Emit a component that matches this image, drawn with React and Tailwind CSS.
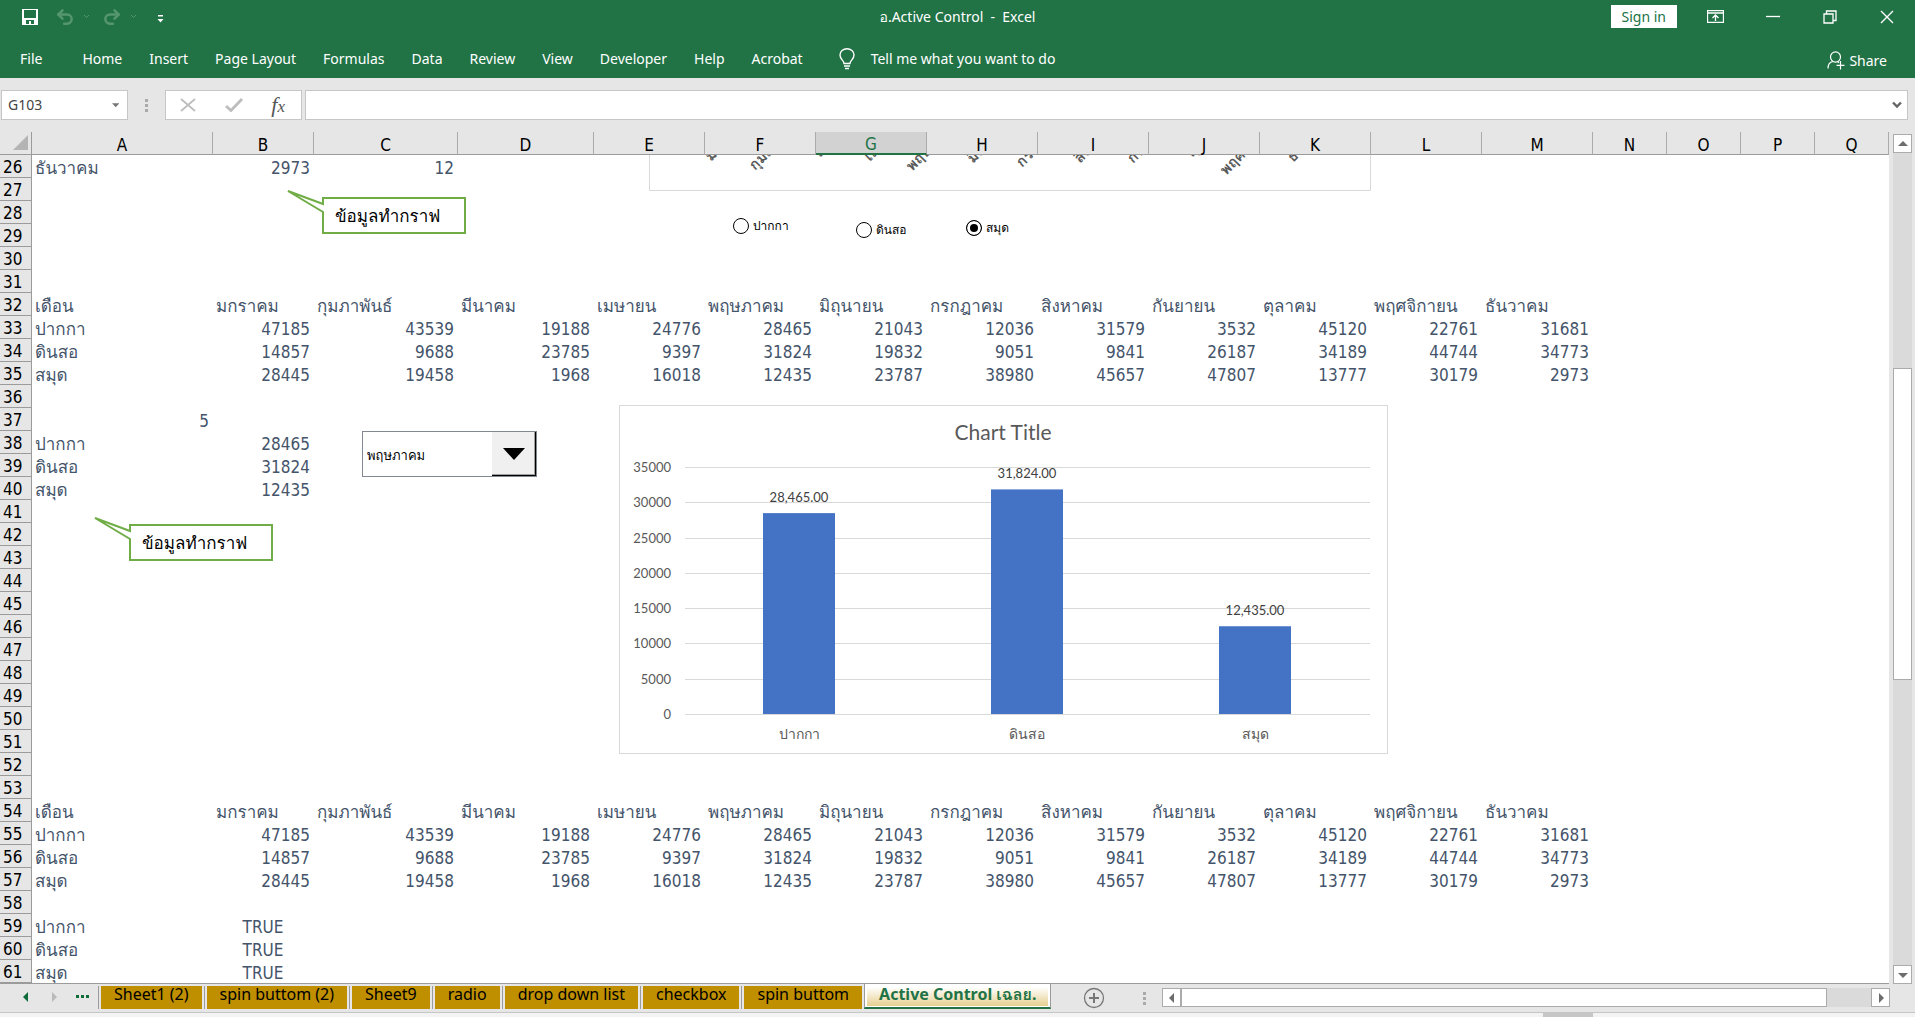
import React, { useState } from "react";
import { Undo2, Redo2 } from "lucide-react";

const menuItems = ["Home", "Insert", "Page Layout", "Formulas", "Data", "Review", "View", "Developer", "Help", "Acrobat"];

const columns = "ABCDEFGHIJKLMNOPQ".split("");

const months = [
	"เดือน", "มกราคม", "กุมภาพันธ์", "มีนาคม", "เมษายน", "พฤษภาคม", "มิถุนายน",
	"กรกฎาคม", "สิงหาคม", "กันยายน", "ตุลาคม", "พฤศจิกายน", "ธันวาคม",
];
const pens = ["ปากกา", 47185, 43539, 19188, 24776, 28465, 21043, 12036, 31579, 3532, 45120, 22761, 31681];
const pencils = ["ดินสอ", 14857, 9688, 23785, 9397, 31824, 19832, 9051, 9841, 26187, 34189, 44744, 34773];
const notebooks = ["สมุด", 28445, 19458, 1968, 16018, 12435, 23787, 38980, 45657, 47807, 13777, 30179, 2973];

const cells = {
	26: ["ธันวาคม", 2973, 12],
	32: months,
	33: pens,
	34: pencils,
	35: notebooks,
	37: [5],
	38: ["ปากกา", 28465],
	39: ["ดินสอ", 31824],
	40: ["สมุด", 12435],
	54: months,
	55: pens,
	56: pencils,
	57: notebooks,
	59: ["ปากกา", true],
	60: ["ดินสอ", true],
	61: ["สมุด", true],
};

const rowNumbers = Array.from({ length: 36 }, (_, i) => i + 26);

const sheetTabs = ["Sheet1 (2)", "spin buttom (2)", "Sheet9", "radio", "drop down list", "checkbox", "spin buttom"];

// Visible start of each slanted axis label of the upper chart
const slantedLabels = [
	{ text: "มกราคม", x: 62, y: 7 },
	{ text: "กุมภาพันธ์", x: 106, y: 16 },
	{ text: "มีนาคม", x: 171, y: 3 },
	{ text: "เมษายน", x: 221, y: 7 },
	{ text: "พฤษภาคม", x: 263, y: 17 },
	{ text: "มิถุนายน", x: 324, y: 9 },
	{ text: "กรกฎาคม", x: 373, y: 13 },
	{ text: "สิงหาคม", x: 431, y: 9 },
	{ text: "กันยายน", x: 484, y: 9 },
	{ text: "ตุลาคม", x: 543, y: 3 },
	{ text: "พฤศจิกายน", x: 577, y: 21 },
	{ text: "ธันวาคม", x: 644, y: 8 },
];

const chartBars = [
	{ name: "ปากกา", value: 28465, label: "28,465.00" },
	{ name: "ดินสอ", value: 31824, label: "31,824.00" },
	{ name: "สมุด", value: 12435, label: "12,435.00" },
];

const Chevron = ({ className }) => (
	<svg width="7" height="5" viewBox="0 0 7 5" className={className} aria-hidden="true">
		<path d="M1 1l2.5 2.5L6 1" fill="none" stroke="currentColor" />
	</svg>
);

const Triangle = ({ dir }) => {
	const points = {
		up: "1,8 11,8 6,3",
		down: "1,4 11,4 6,9",
		left: "8,1 8,11 3,6",
		right: "4,1 4,11 9,6",
	};
	return (
		<svg width="12" height="12" viewBox="0 0 12 12" aria-hidden="true">
			<polygon points={points[dir]} fill="currentColor" />
		</svg>
	);
};

const Dots = () => (
	<div className="flex flex-col gap-[2px]">
		<span className="h-[3px] w-[3px] bg-[#aaaaaa]" />
		<span className="h-[3px] w-[3px] bg-[#aaaaaa]" />
		<span className="h-[3px] w-[3px] bg-[#aaaaaa]" />
	</div>
);

const TitleBar = () => (
	<div className="grid h-[33px] grid-cols-[1fr_auto_1fr] items-center">
		<div className="flex items-center pl-[21px]">
			<button aria-label="Save">
				<svg width="18" height="18" viewBox="0 0 18 18">
					<path d="M1 1h16v16H1z" fill="#fff" />
					<path d="M3 2h12v8H3zM5 12h8v4h-3v-3H8v3H5z" fill="#217346" />
				</svg>
			</button>
			<button aria-label="Undo" className="ml-4 text-[#56966f]">
				<Undo2 size={20} strokeWidth={3} />
			</button>
			<Chevron className="ml-2 text-[#56966f]" />
			<button aria-label="Redo" className="ml-3 text-[#56966f]">
				<Redo2 size={20} strokeWidth={3} />
			</button>
			<Chevron className="ml-2 text-[#56966f]" />
			<button aria-label="Customize Quick Access Toolbar" className="ml-5 pt-1">
				<svg width="7" height="8" viewBox="0 0 7 8">
					<path d="M1 0h5v1.500H1zM0.500 4h6l-3 3.500z" fill="#fff" />
				</svg>
			</button>
		</div>
		<h1 className="whitespace-pre text-sm">อ.Active Control  -  Excel</h1>
		<div className="flex items-center justify-end">
			<button className="mr-[10px] h-[23px] bg-white px-[11px] text-sm leading-[23px] text-[#217346]">
				Sign in
			</button>
			<button aria-label="Ribbon Display Options" className="flex w-[57px] justify-center">
				<svg width="17" height="13" viewBox="0 0 17 13" fill="none" stroke="#fff">
					<path d="M0.500 0.500h16v12h-16zM0.500 3h16M8.500 11V5.500M5.500 8l3-3 3 3" strokeWidth="1.300" />
				</svg>
			</button>
			<button aria-label="Minimize" className="flex w-[57px] justify-center">
				<svg width="14" height="13" viewBox="0 0 14 13">
					<path d="M0 6.500h14" stroke="#fff" strokeWidth="1.300" />
				</svg>
			</button>
			<button aria-label="Restore" className="flex w-[57px] justify-center">
				<svg width="14" height="14" viewBox="0 0 14 14" fill="none" stroke="#fff" strokeWidth="1.300">
					<path d="M1 4h9v9H1zM3.500 4V1H13v9.500h-3" />
				</svg>
			</button>
			<button aria-label="Close" className="flex w-[57px] justify-center">
				<svg width="14" height="14" viewBox="0 0 14 14">
					<path d="M1 1l12 12M13 1L1 13" stroke="#fff" strokeWidth="1.400" />
				</svg>
			</button>
		</div>
	</div>
);

const RibbonTabs = () => (
	<nav className="flex h-[45px] items-center pl-5 pr-7 pt-[6px] text-[14px]">
		<a href="#file" className="mr-10">File</a>
		<div className="flex gap-[27px]">
			{menuItems.map((item) => (
				<a key={item} href={"#" + item}>{item}</a>
			))}
		</div>
		<button className="ml-9 flex items-center gap-4">
			<svg width="16" height="22" viewBox="0 0 16 22" fill="none" stroke="#fff" strokeWidth="1.400">
				<path d="M5 15.500c0-3-4-4-4-8.500a7 6.300 0 0 1 14 0c0 4.500-4 5.500-4 8.500zM5 18h6M6 20.500h4" />
			</svg>
			Tell me what you want to do
		</button>
		<button className="ml-auto flex items-center gap-1 pt-[3px]">
			<svg width="18" height="19" viewBox="0 0 18 19" fill="none" stroke="#fff" strokeWidth="1.200">
				<ellipse cx="8.500" cy="6" rx="5" ry="5.200" />
				<path d="M1 17.500c0-4 2-6.500 5-7M10.500 10.500l1.500 1.200M13.500 10v8.500M9.500 14.300h8" />
			</svg>
			Share
		</button>
	</nav>
);

const FormulaBar = () => (
	<div className="flex items-center pb-3 pl-px pr-[7px] pt-3 text-sm text-[#444]">
		<div className="flex h-[30px] w-[127px] items-center border border-[#c6c6c6] bg-white pl-[6px] pr-2">
			<input aria-label="Name Box" defaultValue="G103" className="w-full min-w-0 bg-transparent outline-none" />
			<svg width="8" height="5" viewBox="0 0 8 5" aria-hidden="true">
				<polygon points="0,0 8,0 4,4.500" fill="#777" />
			</svg>
		</div>
		<div className="flex w-[37px] justify-center">
			<Dots />
		</div>
		<div className="flex h-[30px] w-[137px] items-center justify-between border border-[#c6c6c6] bg-white pl-[14px] pr-4">
			<button aria-label="Cancel">
				<svg width="16" height="14" viewBox="0 0 16 14">
					<path d="M1 1l14 12M15 1L1 13" stroke="#bdbdbd" strokeWidth="1.800" />
				</svg>
			</button>
			<button aria-label="Enter">
				<svg width="18" height="14" viewBox="0 0 18 14">
					<path d="M1 8l5 4.500L17 1" fill="none" stroke="#bdbdbd" strokeWidth="2.800" />
				</svg>
			</button>
			<button aria-label="Insert Function" className="font-['Liberation_Serif',serif] text-[22px] italic leading-none text-[#555]">
				f<span className="text-[17px]">x</span>
			</button>
		</div>
		<div className="ml-[3px] flex h-[30px] flex-1 items-center border border-[#c6c6c6] bg-white pr-[5px]">
			<input aria-label="Formula Bar" className="flex-1 bg-transparent px-2 outline-none" />
			<svg width="10" height="8" viewBox="0 0 10 8" aria-hidden="true">
				<path d="M1 1.500l4 4 4-4" fill="none" stroke="#666" strokeWidth="2.400" />
			</svg>
		</div>
	</div>
);

const Cell = ({ value }) => {
	let align = "text-left";
	if (typeof value === "number") align = "text-right";
	if (value === true) align = "text-center";
	return (
		<td className={"h-[23px] whitespace-nowrap bg-white pb-0 pl-[3px] pr-1 pt-[2px] " + align}>
			{value === true ? "TRUE" : value}
		</td>
	);
};

const Grid = () => (
	<table className="w-full table-fixed border-separate border-spacing-0 border-r border-[#9b9b9b] text-[17px] leading-[20px] text-[#44546a]">
		<colgroup>
			<col className="w-8" />
			<col className="w-[181px]" />
			<col className="w-[101px]" />
			<col className="w-[144px]" />
			<col className="w-[136px]" />
			{columns.slice(4, 13).map((c) => (
				<col key={c} className="w-[111px]" />
			))}
			{columns.slice(13).map((c) => (
				<col key={c} className="w-[74px]" />
			))}
		</colgroup>
		<thead>
			<tr className="bg-[#e6e6e6] leading-[18px] text-black">
				<th className="h-[23px] border-b border-r border-[#9b9b9b] p-0">
					<svg width="15" height="16" viewBox="0 0 15 16" className="ml-auto mr-[3px]" aria-label="Select All">
						<polygon points="15,0 15,15 0,15" fill="#b4b4b4" />
					</svg>
				</th>
				{columns.map((c) => (
					<th
						key={c}
						scope="col"
						className={
							c === "G"
								? "h-[23px] border-b-2 border-r border-[#217346] border-r-[#ababab] bg-[#d2d2d2] p-0 pt-[3px] font-normal text-[#217346]"
								: "h-[23px] border-b border-r border-[#9b9b9b] border-r-[#ababab] p-0 pt-[3px] font-normal"
						}>
						{c}
					</th>
				))}
			</tr>
		</thead>
		<tbody>
			{rowNumbers.map((row) => (
				<tr key={row}>
					<th
						scope="row"
						className="h-[23px] border-b border-r border-[#9b9b9b] bg-[#e6e6e6] pb-0 pl-[3px] pr-0 pt-[2px] text-left font-normal text-black">
						{row}
					</th>
					{columns.map((c, i) => (
						<Cell key={c} value={cells[row]?.[i]} />
					))}
				</tr>
			))}
		</tbody>
	</table>
);

const Callout = () => (
	<svg width="180" height="46" viewBox="0 0 180 46" className="text-[17px]">
		<path d="M36 8H178V43H36V22L1 1L36 14Z" fill="#fff" stroke="#70ad47" strokeWidth="2" />
		<text x="48" y="32" fill="#000">ข้อมูลทำกราฟ</text>
	</svg>
);

const UpperChart = () => (
	<svg width="722" height="37" viewBox="0 0 722 37" className="text-[15px] font-bold">
		<path d="M0.500 0V35.500H721.500V0" fill="#fff" stroke="#d9d9d9" />
		{slantedLabels.map((l) => (
			<text key={l.text} fill="#595959" transform={`translate(${l.x} ${l.y}) rotate(-45)`}>
				{l.text}
			</text>
		))}
	</svg>
);

const BarChart = () => {
	const base = 309;
	const height = 247;
	return (
		<svg width="769" height="349" viewBox="0 0 769 349" className="font-[Lato,sans-serif] text-[13px]">
			<rect x="0.500" y="0.500" width="768" height="348" fill="#fff" stroke="#d9d9d9" />
			<text x="384" y="35" textAnchor="middle" fill="#595959" className="text-[21px]">Chart Title</text>
			{[0, 5000, 10000, 15000, 20000, 25000, 30000, 35000].map((tick) => {
				const y = Math.round(base - (tick / 35000) * height) + 0.5;
				return (
					<g key={tick}>
						<path d={`M66 ${y}H751`} stroke="#d9d9d9" />
						<text x="52" y={y + 4} textAnchor="end" fill="#595959">{tick}</text>
					</g>
				);
			})}
			{chartBars.map((bar, i) => {
				const h = (bar.value / 35000) * height;
				const x = 180 + i * 228;
				return (
					<g key={bar.name} textAnchor="middle">
						<rect x={x - 36} y={base - h} width="72" height={h} fill="#4472c4" />
						<text x={x} y={base - h - 11} fill="#404040">{bar.label}</text>
						<text x={x} y="334" fill="#595959" className="text-[14px]">{bar.name}</text>
					</g>
				);
			})}
		</svg>
	);
};

const RadioOption = ({ name, checked, onChange }) => (
	<label className="flex items-center gap-1 text-[12px] leading-4 text-black">
		<input
			type="radio"
			name="product"
			checked={checked}
			onChange={onChange}
			className="h-4 w-4 appearance-none rounded-full border border-black bg-white checked:bg-black checked:shadow-[inset_0_0_0_3px_#fff]"
		/>
		{name}
	</label>
);

// Objects that float over the cells
const DrawingLayer = () => {
	const [product, setProduct] = useState("สมุด");
	const pick = (name) => ({ name, checked: product === name, onChange: () => setProduct(name) });

	return (
		<div className="absolute inset-x-0 bottom-0 top-[23px] overflow-hidden">
			<div className="absolute left-[649px] top-0"><UpperChart /></div>
			<div className="absolute left-[287px] top-[35px]"><Callout /></div>
			<div className="absolute left-[733px] top-[63px]"><RadioOption {...pick("ปากกา")} /></div>
			<div className="absolute left-[856px] top-[67px]"><RadioOption {...pick("ดินสอ")} /></div>
			<div className="absolute left-[966px] top-[65px]"><RadioOption {...pick("สมุด")} /></div>
			<div className="absolute left-[362px] top-[276px] h-[46px] w-[175px] border border-[#828790] bg-white text-[13px] text-black">
				<select
					aria-label="เดือน"
					defaultValue="พฤษภาคม"
					className="h-full w-full appearance-none bg-transparent pl-1 pt-1 outline-none">
					{months.slice(1).map((m) => (
						<option key={m}>{m}</option>
					))}
				</select>
				<div className="pointer-events-none absolute inset-y-0 right-0 flex w-[44px] items-center justify-center border-b border-r border-black bg-[#f0f0f0] shadow-[inset_-1px_-1px_0_#a0a0a0]">
					<svg width="22" height="12" viewBox="0 0 22 12">
						<polygon points="0,0 22,0 11,12" fill="#000" />
					</svg>
				</div>
			</div>
			<div className="absolute left-[94px] top-[362px]"><Callout /></div>
			<div className="absolute left-[619px] top-[250px]"><BarChart /></div>
		</div>
	);
};

const ScrollButton = ({ dir }) => (
	<button
		aria-label={"Scroll " + dir}
		className="flex h-[19px] w-[19px] shrink-0 items-center justify-center border border-[#ababab] bg-white text-[#6d6d6d]">
		<Triangle dir={dir} />
	</button>
);

const VerticalScroll = () => (
	<div className="flex w-[26px] shrink-0 flex-col pl-[4px] pr-[3px] pt-[2px]">
		<ScrollButton dir="up" />
		<div className="flex w-[19px] flex-1 flex-col bg-[#dadada]">
			<div className="flex-[216]" />
			<div className="flex-[310] border border-[#ababab] bg-white" />
			<div className="flex-[286]" />
		</div>
		<ScrollButton dir="down" />
	</div>
);

const SheetTabs = () => (
	<div className="flex h-[29px] items-start border-b border-[#c6c6c6] pr-[25px] font-['Noto_Sans',Loma,sans-serif] text-base">
		<div className="flex h-[29px] w-[98px] items-center gap-4 pb-1 pl-5 text-[#0e6b3a]">
			<button aria-label="Previous sheet"><Triangle dir="left" /></button>
			<button aria-label="Next sheet" className="text-[#b9b9b9]"><Triangle dir="right" /></button>
			<button aria-label="More sheets" className="flex gap-[2px]">
				<span className="h-[3px] w-[3px] bg-current" />
				<span className="h-[3px] w-[3px] bg-current" />
				<span className="h-[3px] w-[3px] bg-current" />
			</button>
		</div>
		{sheetTabs.map((tab) => (
			<div key={tab} className="mt-[2px] border-l border-[#9b9b9b] px-[2px] text-black">
				<button className="block h-[23px] bg-[#bf8f00] px-[13px] pb-[7px] leading-[16px]">{tab}</button>
			</div>
		))}
		<button className="-mt-px h-[26px] border-x border-b-2 border-[#9b9b9b] border-b-[#217346] bg-white px-[2px] pb-[2px] pt-1 font-bold text-[#217346]">
			<span className="block h-[19px] bg-linear-to-b from-white to-[#e6d08f] px-3 leading-[14px]">
				Active Control เฉลย.
			</span>
		</button>
		<button aria-label="New sheet" className="ml-8 mt-[3px]">
			<svg width="22" height="22" viewBox="0 0 22 22" fill="none" stroke="#777">
				<circle cx="11" cy="11" r="9.500" strokeWidth="1.300" />
				<path d="M11 6v10M6 11h10" strokeWidth="2" />
			</svg>
		</button>
		<div className="ml-auto mr-4 mt-2"><Dots /></div>
		<div className="mt-[4px] flex w-[728px] bg-[#dadada]">
			<ScrollButton dir="left" />
			<div className="h-[19px] flex-[646] border border-[#ababab] bg-white" />
			<div className="flex-[44]" />
			<ScrollButton dir="right" />
		</div>
	</div>
);

const App = () => (
	<div className="flex min-h-screen flex-col overflow-hidden bg-[#e6e6e6] font-['Noto_Sans',Loma,sans-serif]">
		<header className="bg-[#217346] text-white">
			<TitleBar />
			<RibbonTabs />
		</header>
		<FormulaBar />
		<main className="flex">
			<div className="relative min-w-0 flex-1 overflow-hidden border-b border-[#9b9b9b] font-['DejaVu_Sans_Condensed',Loma,sans-serif]">
				<Grid />
				<DrawingLayer />
			</div>
			<VerticalScroll />
		</main>
		<SheetTabs />
		<footer className="flex-1 bg-[#f3f3f3]">
			<div className="ml-auto mr-[322px] h-[5px] w-[50px] bg-[#c6c6c6]" />
		</footer>
	</div>
);

export default App;
